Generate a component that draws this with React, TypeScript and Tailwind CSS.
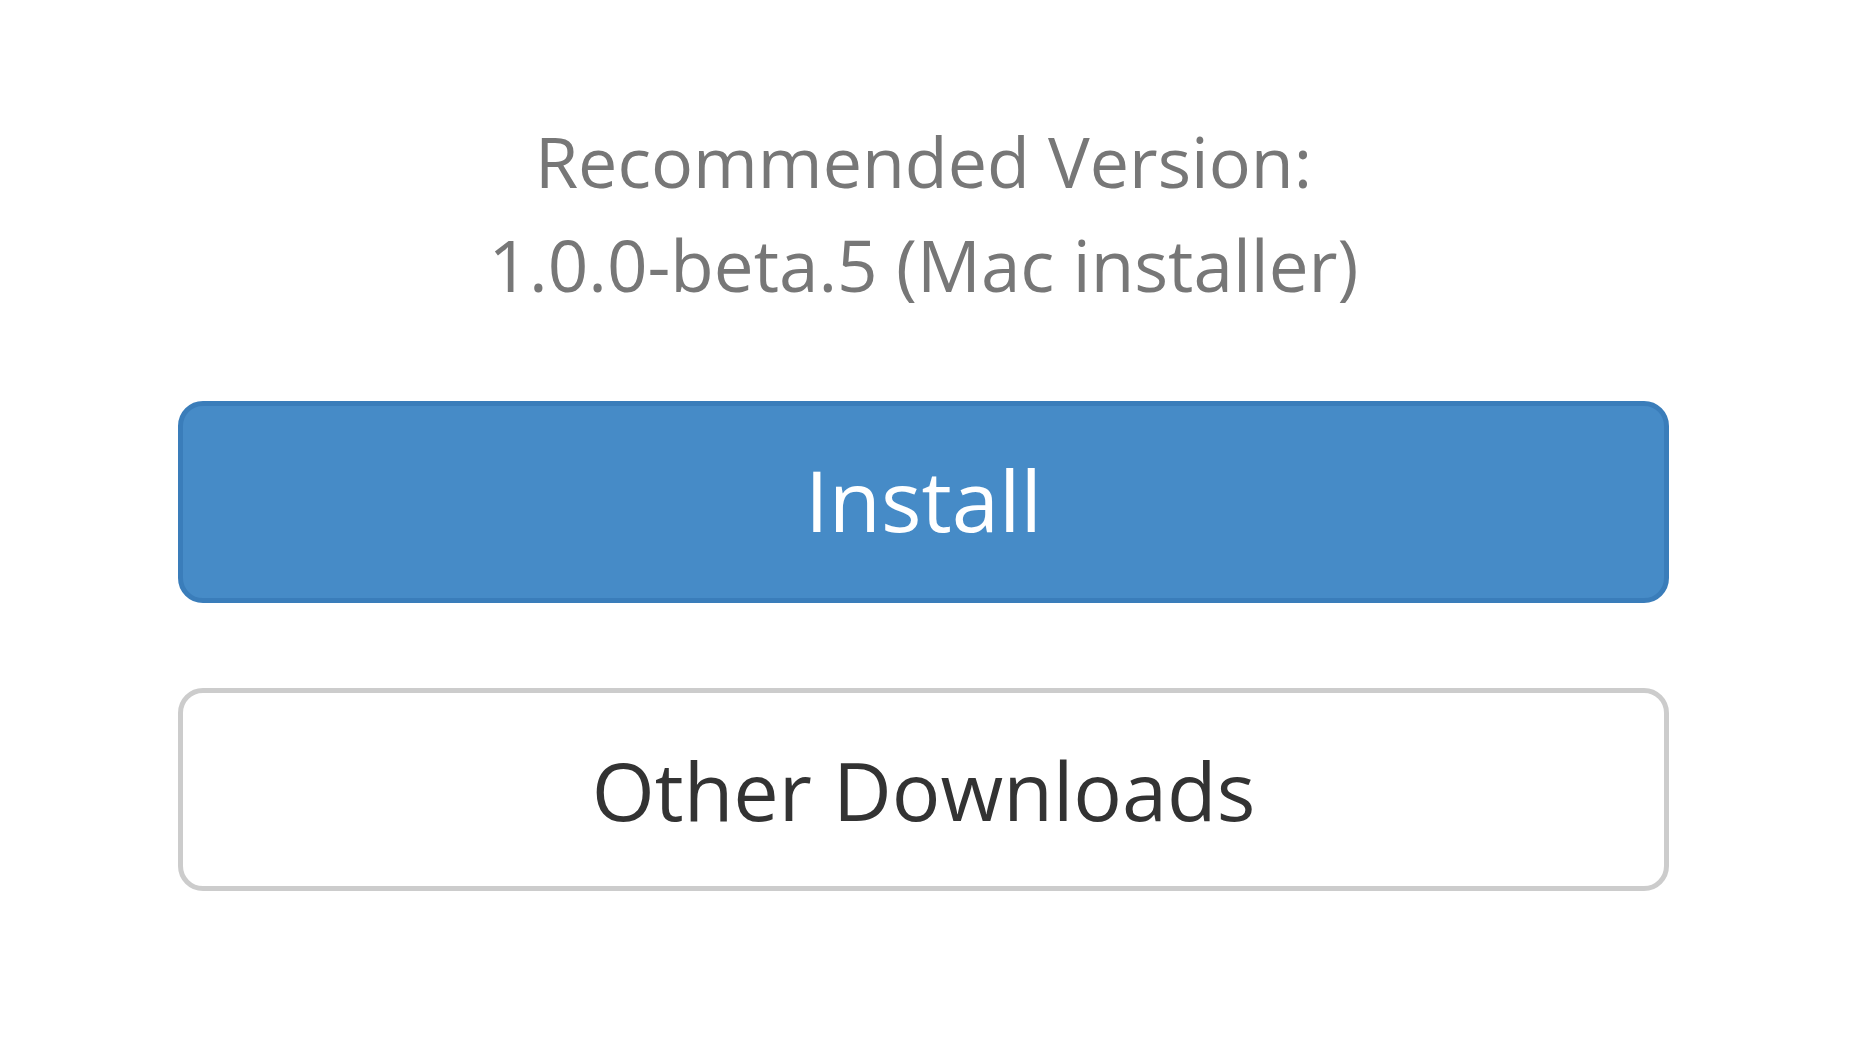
export default function App() {
  return (
    <div
      className="min-h-[1040px] w-[1856px] bg-white pl-[178px] pr-[187px] pt-[110px]"
      style={{ fontFamily: '"Open Sans", "Noto Sans", sans-serif' }}
    >
      {/* Version heading */}
      <div className="text-center text-[70px] leading-[103px] text-[#777777]">
        <p>Recommended Version:</p>
        <p className="text-[71px]">1.0.0-beta.5 (Mac installer)</p>
      </div>

      {/* Actions */}
      <div className="mt-[85px] flex flex-col gap-[85px]">
        <button className="flex h-[202px] w-full items-center justify-center rounded-[25px] border-[5px] border-[#3a7dba] bg-[#468bc7] pb-[4px] text-[85px] text-white">
          Install
        </button>
        <button className="flex h-[203px] w-full items-center justify-center rounded-[25px] border-[5px] border-[#cccccc] bg-white text-[81px] text-[#333333]">
          Other Downloads
        </button>
      </div>
    </div>
  );
}
